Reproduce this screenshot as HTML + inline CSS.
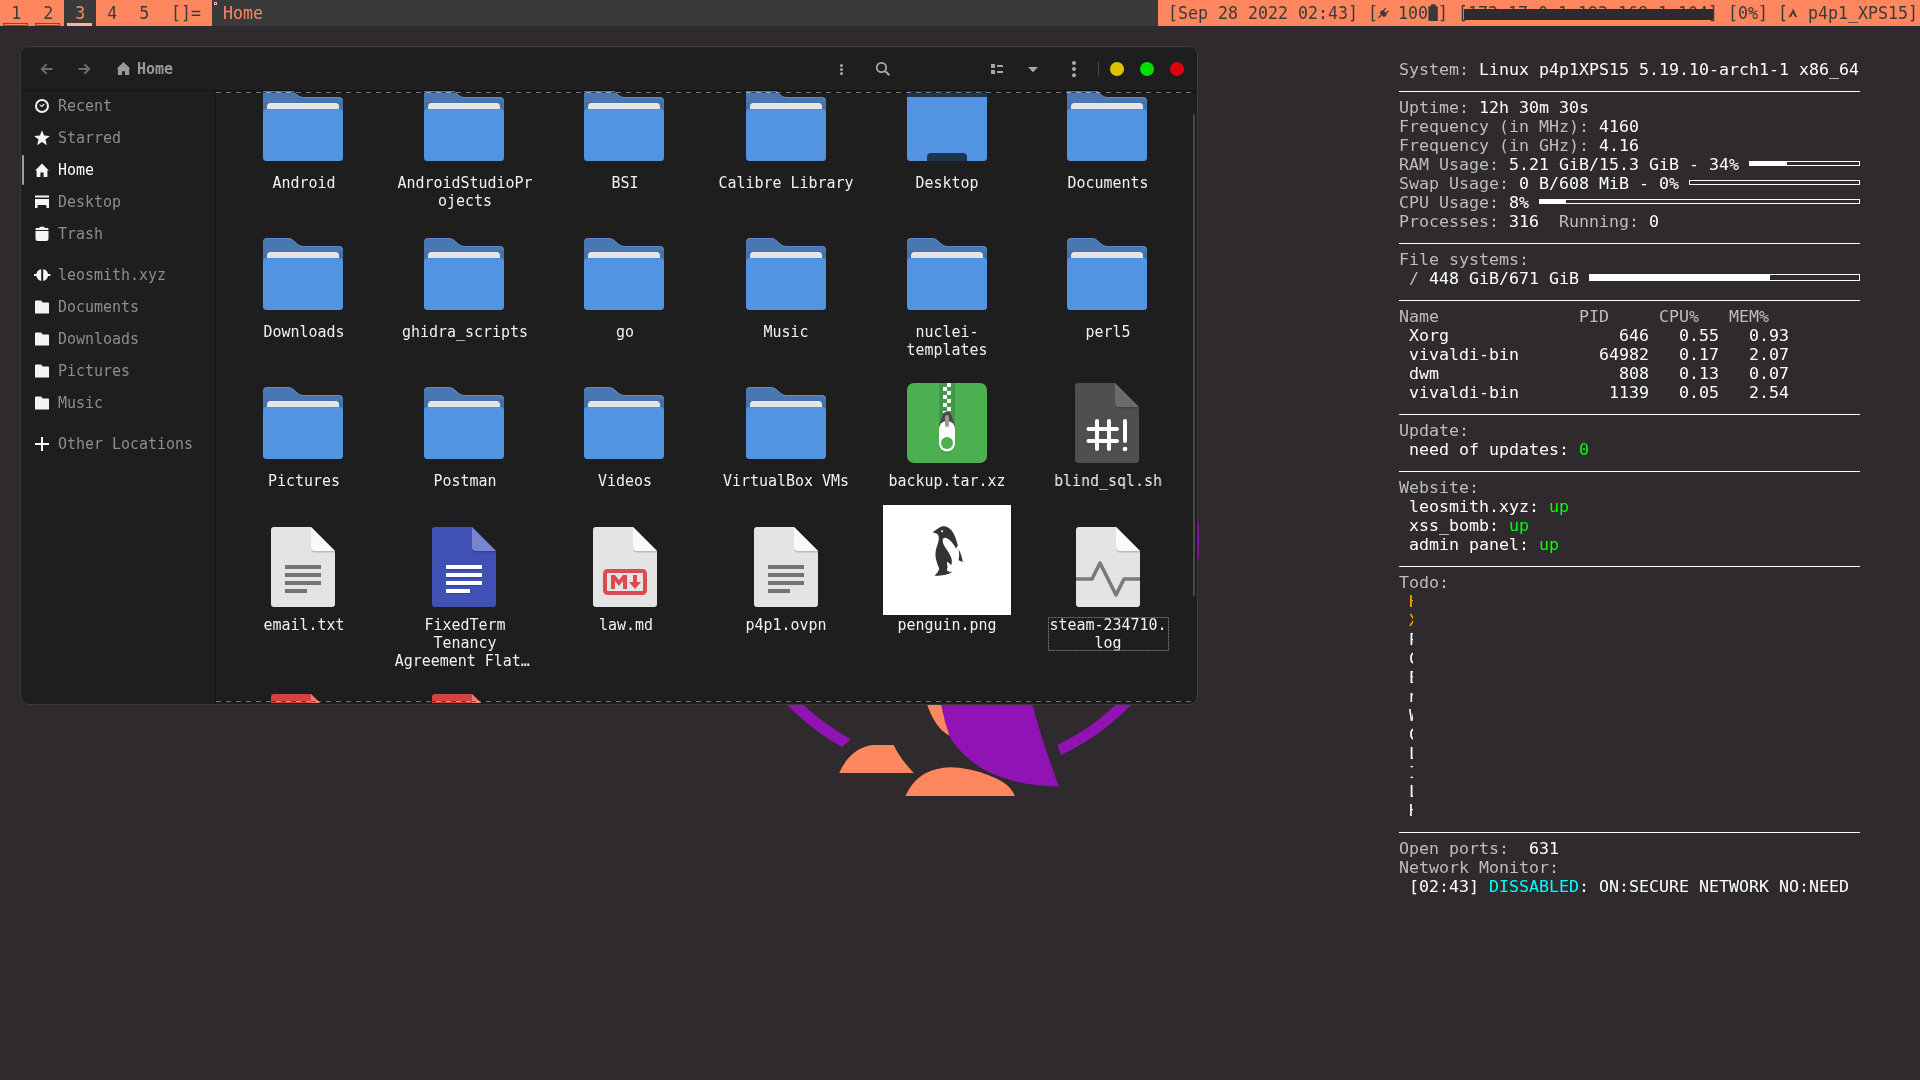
<!DOCTYPE html>
<html lang="en"><head><meta charset="utf-8"><title>Home</title>
<style>
*{box-sizing:border-box;margin:0;padding:0}
html,body{width:1920px;height:1080px;overflow:hidden;background:#2e2a2e}
body{position:relative;font-family:"DejaVu Sans Mono","Liberation Mono",monospace;}
.abs{position:absolute}
#wall{position:absolute;left:0;top:0;width:1920px;height:1080px}
#bar{position:absolute;left:0;top:0;width:1920px;height:26px;background:#3a3a3a;font-size:17.83px;line-height:26px;white-space:pre;will-change:transform;color:#ff875f}
#bar .t{position:absolute;top:0;height:26px;text-align:center}
#bar .t span{display:inline-block;height:26px;transform:scaleX(.9316);transform-origin:50% 50%}
#bar .l{text-align:left}
#bar .l span{transform-origin:0 50%}
#bar .o{background:#ff875f;color:#3a3a3a}
#bar svg{position:absolute}
#win{position:absolute;left:20px;top:46px;width:1178px;height:659px;border:1px solid #3b3b3b;border-radius:9px;background:#1e1e1e;overflow:hidden;will-change:transform;font-size:16.5px;line-height:18px;color:#f2f2f2}
#win svg{position:absolute;overflow:visible}
#hdr{position:absolute;left:0;top:0;width:1176px;height:44px;background:#1e1e1e;border-bottom:1px solid #151515;box-shadow:inset 0 1px 0 #262626}
#side{position:absolute;left:0;top:44px;width:195px;height:613px;border-right:1px solid #151515;white-space:pre}
#side .it{position:absolute;left:37px;height:18px;color:#929292;transform:scaleX(.906);transform-origin:0 50%}
#view{position:absolute;left:195px;top:44px;width:981px;height:612px;overflow:hidden}
#view .lb{position:absolute;width:200px;margin-left:-20px;text-align:center;white-space:pre;transform:scaleX(.906);transform-origin:50% 50%}
#conky{position:absolute;left:1399px;top:0;width:470px;height:920px;font-size:16.61px;line-height:19px;white-space:pre;color:#fff;will-change:transform}
#conky div{position:absolute;left:0;height:19px}
#conky .hr{height:1px;width:461px;background:#fff}
#conky .g{color:#bebebe}
#conky .bar{border:1px solid #fff;height:5px}
#conky .bar i{display:block;height:3px;background:#fff}
#conky .td{width:4px;overflow:hidden;left:10px}
</style></head>
<body>
<svg id="wall" viewBox="0 0 1920 1080" width="1920" height="1080"><path fill="#9213b5" d="M841.8 747 A239.0 239.0 0 1 1 1060.9 755.1 L1057.4 744.9 A227.3 227.3 0 1 0 851 739.3 Z"/><path fill="#9213b5" d="M1197.5 513 Q1200.8 541 1197.5 569 Z"/><path fill="#9213b5" d="M938 690 C939 700 941 712 944 720.5 C946 727 947.5 731 949 734.7 C951 739 953 742 956.2 746 C960 751 965 756 971.5 761.2 C978 766 984 770 991.8 773.4 C999 776.5 1005 778.5 1012.2 780.5 C1025 784 1040 786 1058.7 786.6 C1048 756 1039 730 1032.4 704.5 L1029 690 Z"/><path fill="#ff875f" d="M922 690 C924 698 925.5 701 927.2 704.5 C929 710 931 715 933.8 719.4 C938 727 943 732 949.5 735.5 L945 722 L940 700 L939 690 Z"/><path fill="#ff875f" d="M839.2 773 C844 762 852 752 862 748 C866 746 870 745 874 745 L893.7 745 C898 754 905 764 913.8 773 Z"/><path fill="#ff875f" d="M905.3 796 C910 787 916 778 925 773.5 C933 769.5 941 767.5 950 767.3 C962 767.5 975 770 985 774 C995 777.5 1003 781 1008 786 C1011 789 1013.5 792.5 1014.8 796 Z"/></svg>
<div id="bar"><span class="t o" style="left:0px;width:32px"><span>1</span></span><span class="t o" style="left:32px;width:32px"><span>2</span></span><span class="t" style="left:64px;width:32px"><span>3</span></span><span class="t o" style="left:96px;width:32px"><span>4</span></span><span class="t o" style="left:128px;width:32px"><span>5</span></span><span class="t o" style="left:160px;width:52px"><span>[]=</span></span><span class="t l" style="left:223px"><span>Home</span></span><span class="abs" style="left:3px;top:23px;width:25px;height:3px;border:1px solid #505862"></span><span class="abs" style="left:35px;top:23px;width:25px;height:3px;border:1px solid #505862"></span><span class="abs" style="left:67px;top:23px;width:25px;height:3px;background:#ffb392"></span><span class="abs" style="left:214px;top:2px;width:3px;height:3px;border:1px solid #ffba92;background:#3a302c"></span><span class="abs o" style="left:1158px;top:0;width:762px;height:26px"></span><span class="t l" style="left:1168px;color:#3a3a3a"><span>[Sep 28 2022 02:43] [</span></span><span class="t l" style="left:1398px;color:#3a3a3a"><span>100</span></span><span class="t l" style="left:1438px;color:#3a3a3a"><span>] [172.17.0.1 192.168.1.104] [0%] [</span></span><span class="t l" style="left:1808px;color:#3a3a3a"><span>p4p1_XPS15]</span></span><svg style="left:1378px;top:7px" width="11" height="12" viewBox="0 0 11 12"><g fill="#3a3a3a" stroke="#3a3a3a" stroke-linecap="round"><path d="M0.6 10.6 L3 8.2" stroke-width="1.3" fill="none"/><path d="M2.2 6.3 L5.6 9.7 C7.6 9.6 8.6 8.2 8.3 6.6 L5.3 3.6 C3.5 3.4 2.2 4.5 2.2 6.3 Z" stroke-width="0.6"/><path d="M5.6 3.6 L7.6 1.4 M8.2 6.2 L10.3 4.1" stroke-width="1.2" fill="none"/></g></svg><svg style="left:1428px;top:4px" width="10" height="17" viewBox="0 0 10 17"><path fill="#3a3a3a" d="M3 0.3 h4.6 v2 h1.6 q0.6 0 0.6 0.6 v13.4 q0 0.6 -0.6 0.6 h-8.2 q-0.6 0 -0.6 -0.6 v-13.4 q0 -0.6 0.6 -0.6 h2 z"/></svg><svg style="left:1788px;top:8px" width="10" height="10" viewBox="0 0 10 10"><path fill="#3a3a3a" d="M5 0.5 C4.6 1.6 4.3 2.3 3.8 3.3 C4.1 3.6 4.5 4 5.1 4.4 C4.4 4.1 4 3.9 3.6 3.7 C3 5 2 6.900 0.200 9.800 C1.700 8.900 2.900 8.400 4 8.200 C3.950 8 3.900 7.800 3.900 7.500 C3.950 6.500 4.500 5.700 5.100 5.750 C5.700 5.800 6.150 6.600 6.100 7.600 C6.100 7.800 6.050 8 6 8.200 C7.100 8.400 8.300 8.900 9.800 9.800 C9.500 9.250 9.250 8.750 9 8.300 C8.600 8 8.200 7.600 7.400 7.200 C7.950 7.350 8.350 7.500 8.650 7.700 C6.200 3.100 6 2.500 5 0.500 Z"/></svg><span class="abs" style="left:1464px;top:9px;width:249px;height:11px;background:#2e2a2e;border-radius:1px"></span></div>
<div id="win"><div id="hdr"><svg style="left:19px;top:15px" width="14" height="14" viewBox="0 0 14 14"><path d="M12.5 7 H2 M6.6 2.2 L1.8 7 L6.6 11.8" fill="none" stroke="#6c6c6c" stroke-width="2"/></svg><svg style="left:56px;top:15px" width="14" height="14" viewBox="0 0 14 14"><path d="M1.5 7 H12 M7.4 2.2 L12.2 7 L7.4 11.8" fill="none" stroke="#6c6c6c" stroke-width="2"/></svg><svg style="left:95px;top:14px" width="16" height="16" viewBox="0 0 16 16"><path fill="#9a9a9a" d="M7.500 0.900 L14.200 7.600 H13.200 V14 H9 V10.300 H6.100 V14 H1.900 V7.600 H0.900 Z"/></svg><span class="abs" style="left:116px;top:13px;font-weight:bold;color:#9a9a9a;white-space:pre;transform:scaleX(.906);transform-origin:0 50%">Home</span><svg style="left:817px;top:15px" width="8" height="16" viewBox="0 0 8 16"><g fill="#a8a8a8"><circle cx="3.5" cy="3.6" r="1.5"/><circle cx="3.5" cy="7.6" r="1.5"/><circle cx="3.5" cy="11.6" r="1.5"/></g></svg><svg style="left:853px;top:13px" width="18" height="18" viewBox="0 0 18 18"><g fill="none" stroke="#a8a8a8" stroke-width="1.8"><circle cx="7.5" cy="7.5" r="4.7"/><path d="M11 11 L15.4 15.2" stroke-width="2"/></g></svg><svg style="left:969px;top:15px" width="16" height="14" viewBox="0 0 16 14"><g fill="#a8a8a8"><rect x="1" y="2" width="4" height="4"/><rect x="1" y="8" width="4" height="4"/><rect x="7" y="3" width="6" height="2"/><rect x="7" y="9" width="6" height="2"/></g></svg><svg style="left:1005px;top:17px" width="14" height="10" viewBox="0 0 14 10"><path fill="#a8a8a8" d="M2 3 H12 L7 8.2 Z"/></svg><svg style="left:1049px;top:13px" width="8" height="18" viewBox="0 0 8 18"><g fill="#a8a8a8"><circle cx="4" cy="3" r="2"/><circle cx="4" cy="9.1" r="2"/><circle cx="4" cy="15.2" r="2"/></g></svg><span class="abs" style="left:1077px;top:15px;width:1px;height:14px;background:#4a4a4a"></span><span class="abs" style="left:1089px;top:15px;width:14px;height:14px;border-radius:50%;background:#e0c300"></span><span class="abs" style="left:1119px;top:15px;width:14px;height:14px;border-radius:50%;background:#00e000"></span><span class="abs" style="left:1149px;top:15px;width:14px;height:14px;border-radius:50%;background:#e0000f"></span></div><div id="side"><svg style="left:13px;top:7px" width="16" height="16" viewBox="0 0 16 16"><circle cx="8" cy="8" r="6" fill="none" stroke="#f6f5f4" stroke-width="2"/><path d="M5.600 6.600 L7.900 8.400 L10.300 6" fill="none" stroke="#f6f5f4" stroke-width="1.100"/></svg><span class="it" style="top:6px;color:#8e8e8e">Recent</span><svg style="left:13px;top:39px" width="16" height="16" viewBox="0 0 16 16"><path fill="#f6f5f4" d="M8 0.2 L10.1 5.6 L15.9 5.9 L11.4 9.6 L12.9 15.2 L8 12.1 L3.1 15.2 L4.6 9.6 L0.1 5.9 L5.9 5.6 Z"/></svg><span class="it" style="top:38px;color:#8e8e8e">Starred</span><svg style="left:13px;top:71px" width="16" height="16" viewBox="0 0 16 16"><path fill="#f6f5f4" d="M8 1.6 L14.8 8.4 H13.4 V15 H9.6 V10.6 H6.4 V15 H2.6 V8.4 H1.2 Z"/></svg><span class="it" style="top:70px;color:#ffffff">Home</span><svg style="left:13px;top:103px" width="16" height="16" viewBox="0 0 16 16"><path fill="#f6f5f4" d="M1 1.5 H15 V3.5 H1 Z M1 5 H15 V14 H12.5 V12 Q12.5 11 11.5 11 H4.5 Q3.500 11 3.500 12 V14 H1 Z"/></svg><span class="it" style="top:102px;color:#8e8e8e">Desktop</span><svg style="left:13px;top:135px" width="16" height="16" viewBox="0 0 16 16"><path fill="#f6f5f4" d="M5.500 0.800 H10.500 V2 H13.500 Q14.500 2 14.500 3 V4 H1.500 V3 Q1.500 2 2.500 2 H5.500 Z M1.500 5 H14.500 V12.500 Q14.500 15 12 15 H4 Q1.500 15 1.500 12.500 Z"/></svg><span class="it" style="top:134px;color:#8e8e8e">Trash</span><svg style="left:13px;top:176px" width="16" height="16" viewBox="0 0 16 16"><path fill="#f6f5f4" d="M7.2 2.3 V13.900 A5.850 5.850 0 0 1 2.400 9.100 H0 V7.100 H2.400 A5.850 5.850 0 0 1 7.200 2.300 Z M9.200 2.300 A5.850 5.850 0 0 1 14 7.100 H16.400 V9.100 H14 A5.850 5.850 0 0 1 9.200 13.900 Z"/></svg><span class="it" style="top:175px;color:#8e8e8e">leosmith.xyz</span><svg style="left:13px;top:208px" width="16" height="16" viewBox="0 0 16 16"><path fill="#f6f5f4" d="M1 2.5 Q1 1.5 2 1.500 H6.500 Q7.500 1.500 8 2.500 L8.600 3.500 H14 Q15 3.500 15 4.500 V14.500 H1 Z"/></svg><span class="it" style="top:207px;color:#8e8e8e">Documents</span><svg style="left:13px;top:240px" width="16" height="16" viewBox="0 0 16 16"><path fill="#f6f5f4" d="M1 2.5 Q1 1.5 2 1.500 H6.500 Q7.500 1.500 8 2.500 L8.600 3.500 H14 Q15 3.500 15 4.500 V14.500 H1 Z"/></svg><span class="it" style="top:239px;color:#8e8e8e">Downloads</span><svg style="left:13px;top:272px" width="16" height="16" viewBox="0 0 16 16"><path fill="#f6f5f4" d="M1 2.5 Q1 1.5 2 1.500 H6.500 Q7.500 1.500 8 2.500 L8.600 3.500 H14 Q15 3.500 15 4.500 V14.500 H1 Z"/></svg><span class="it" style="top:271px;color:#8e8e8e">Pictures</span><svg style="left:13px;top:304px" width="16" height="16" viewBox="0 0 16 16"><path fill="#f6f5f4" d="M1 2.5 Q1 1.5 2 1.500 H6.500 Q7.500 1.500 8 2.500 L8.600 3.500 H14 Q15 3.500 15 4.500 V14.500 H1 Z"/></svg><span class="it" style="top:303px;color:#8e8e8e">Music</span><svg style="left:13px;top:345px" width="16" height="16" viewBox="0 0 16 16"><path fill="#f6f5f4" d="M7 1 H9 V7 H15 V9 H9 V15 H7 V9 H1 V7 H7 Z"/></svg><span class="it" style="top:344px;color:#8e8e8e">Other Locations</span><span class="abs" style="left:1px;top:64px;width:2px;height:30px;background:#9e9e9e;border-radius:1px"></span></div><div id="view"><svg style="left:47px;top:-2px" width="80" height="72" viewBox="0 0 80 72"><path fill="#4877b1" d="M0 4 Q0 0 4 0 H25 Q28 0 30.5 2.200 L34.500 5.800 Q37 8 40 8 H76 Q80 8 80 12 V60 H0 Z"/><path fill="none" stroke="#6b9ad3" stroke-width="1" opacity=".55" d="M0.500 4.500 Q0.500 0.500 4 0.500 H25 Q28 0.500 30.300 2.600 L34.300 6.200 Q37 8.500 40 8.500 H76 Q79.500 8.500 79.500 12"/><path fill="#3b6aa6" d="M0 13 H80 V24 H0 Z" opacity=".35"/><path fill="#e4e4e4" d="M4 17.500 Q4 14 7.500 14 H72.500 Q76 14 76 17.500 V26 H4 Z"/><path fill="#f3f0ea" d="M4.500 17 Q5 14.600 7.500 14.500 H72.500 Q75 14.600 75.500 17 Q75 15.400 72.500 15.300 H7.500 Q5 15.400 4.500 17 Z"/><path fill="#5294e2" d="M0 24 Q0 20 4 20 H76 Q80 20 80 24 V68.500 Q80 72 76.500 72 H3.500 Q0 72 0 68.500 Z"/><path fill="#4a8fe3" d="M0.300 23 Q1 20 4 20 H76 Q79 20 79.700 23 Q79 21 76 21 H4 Q1 21 0.300 23 Z"/></svg><div class="lb" style="left:7.6px;top:83px">Android</div><svg style="left:208px;top:-2px" width="80" height="72" viewBox="0 0 80 72"><path fill="#4877b1" d="M0 4 Q0 0 4 0 H25 Q28 0 30.5 2.200 L34.500 5.800 Q37 8 40 8 H76 Q80 8 80 12 V60 H0 Z"/><path fill="none" stroke="#6b9ad3" stroke-width="1" opacity=".55" d="M0.500 4.500 Q0.500 0.500 4 0.500 H25 Q28 0.500 30.300 2.600 L34.300 6.200 Q37 8.500 40 8.500 H76 Q79.500 8.500 79.500 12"/><path fill="#3b6aa6" d="M0 13 H80 V24 H0 Z" opacity=".35"/><path fill="#e4e4e4" d="M4 17.500 Q4 14 7.500 14 H72.500 Q76 14 76 17.500 V26 H4 Z"/><path fill="#f3f0ea" d="M4.500 17 Q5 14.600 7.500 14.500 H72.500 Q75 14.600 75.500 17 Q75 15.400 72.500 15.300 H7.500 Q5 15.400 4.500 17 Z"/><path fill="#5294e2" d="M0 24 Q0 20 4 20 H76 Q80 20 80 24 V68.500 Q80 72 76.500 72 H3.500 Q0 72 0 68.500 Z"/><path fill="#4a8fe3" d="M0.300 23 Q1 20 4 20 H76 Q79 20 79.700 23 Q79 21 76 21 H4 Q1 21 0.300 23 Z"/></svg><div class="lb" style="left:168.5px;top:83px">AndroidStudioPr<br>ojects</div><svg style="left:368px;top:-2px" width="80" height="72" viewBox="0 0 80 72"><path fill="#4877b1" d="M0 4 Q0 0 4 0 H25 Q28 0 30.5 2.200 L34.500 5.800 Q37 8 40 8 H76 Q80 8 80 12 V60 H0 Z"/><path fill="none" stroke="#6b9ad3" stroke-width="1" opacity=".55" d="M0.500 4.500 Q0.500 0.500 4 0.500 H25 Q28 0.500 30.300 2.600 L34.300 6.200 Q37 8.500 40 8.500 H76 Q79.500 8.500 79.500 12"/><path fill="#3b6aa6" d="M0 13 H80 V24 H0 Z" opacity=".35"/><path fill="#e4e4e4" d="M4 17.500 Q4 14 7.500 14 H72.500 Q76 14 76 17.500 V26 H4 Z"/><path fill="#f3f0ea" d="M4.500 17 Q5 14.600 7.500 14.500 H72.500 Q75 14.600 75.500 17 Q75 15.400 72.500 15.300 H7.500 Q5 15.400 4.500 17 Z"/><path fill="#5294e2" d="M0 24 Q0 20 4 20 H76 Q80 20 80 24 V68.500 Q80 72 76.500 72 H3.500 Q0 72 0 68.500 Z"/><path fill="#4a8fe3" d="M0.300 23 Q1 20 4 20 H76 Q79 20 79.700 23 Q79 21 76 21 H4 Q1 21 0.300 23 Z"/></svg><div class="lb" style="left:328.75px;top:83px">BSI</div><svg style="left:530px;top:-2px" width="80" height="72" viewBox="0 0 80 72"><path fill="#4877b1" d="M0 4 Q0 0 4 0 H25 Q28 0 30.5 2.200 L34.500 5.800 Q37 8 40 8 H76 Q80 8 80 12 V60 H0 Z"/><path fill="none" stroke="#6b9ad3" stroke-width="1" opacity=".55" d="M0.500 4.500 Q0.500 0.500 4 0.500 H25 Q28 0.500 30.300 2.600 L34.300 6.200 Q37 8.500 40 8.500 H76 Q79.500 8.500 79.500 12"/><path fill="#3b6aa6" d="M0 13 H80 V24 H0 Z" opacity=".35"/><path fill="#e4e4e4" d="M4 17.500 Q4 14 7.500 14 H72.500 Q76 14 76 17.500 V26 H4 Z"/><path fill="#f3f0ea" d="M4.500 17 Q5 14.600 7.500 14.500 H72.500 Q75 14.600 75.500 17 Q75 15.400 72.500 15.300 H7.500 Q5 15.400 4.500 17 Z"/><path fill="#5294e2" d="M0 24 Q0 20 4 20 H76 Q80 20 80 24 V68.500 Q80 72 76.500 72 H3.500 Q0 72 0 68.500 Z"/><path fill="#4a8fe3" d="M0.300 23 Q1 20 4 20 H76 Q79 20 79.700 23 Q79 21 76 21 H4 Q1 21 0.300 23 Z"/></svg><div class="lb" style="left:490px;top:83px">Calibre Library</div><svg style="left:691px;top:-2px" width="80" height="72" viewBox="0 0 80 72"><path fill="#5294e2" d="M0 3 Q0 0 3 0 H77 Q80 0 80 3 V68.500 Q80 72 76.500 72 H3.500 Q0 72 0 68.500 Z"/><path fill="#1d344f" d="M0 3 Q0 0 3 0 H77 Q80 0 80 3 V8 H0 Z"/><path fill="#1d344f" d="M20 72 V68 Q20 64 24 64 H56 Q60 64 60 68 V72 Z"/></svg><div class="lb" style="left:651.35px;top:83px">Desktop</div><svg style="left:851px;top:-2px" width="80" height="72" viewBox="0 0 80 72"><path fill="#4877b1" d="M0 4 Q0 0 4 0 H25 Q28 0 30.5 2.200 L34.500 5.800 Q37 8 40 8 H76 Q80 8 80 12 V60 H0 Z"/><path fill="none" stroke="#6b9ad3" stroke-width="1" opacity=".55" d="M0.500 4.500 Q0.500 0.500 4 0.500 H25 Q28 0.500 30.300 2.600 L34.300 6.200 Q37 8.500 40 8.500 H76 Q79.500 8.500 79.500 12"/><path fill="#3b6aa6" d="M0 13 H80 V24 H0 Z" opacity=".35"/><path fill="#e4e4e4" d="M4 17.500 Q4 14 7.500 14 H72.500 Q76 14 76 17.500 V26 H4 Z"/><path fill="#f3f0ea" d="M4.500 17 Q5 14.600 7.500 14.500 H72.500 Q75 14.600 75.500 17 Q75 15.400 72.500 15.300 H7.500 Q5 15.400 4.500 17 Z"/><path fill="#5294e2" d="M0 24 Q0 20 4 20 H76 Q80 20 80 24 V68.500 Q80 72 76.500 72 H3.500 Q0 72 0 68.500 Z"/><path fill="#4a8fe3" d="M0.300 23 Q1 20 4 20 H76 Q79 20 79.700 23 Q79 21 76 21 H4 Q1 21 0.300 23 Z"/></svg><div class="lb" style="left:812px;top:83px">Documents</div><svg style="left:47px;top:147px" width="80" height="72" viewBox="0 0 80 72"><path fill="#4877b1" d="M0 4 Q0 0 4 0 H25 Q28 0 30.5 2.200 L34.500 5.800 Q37 8 40 8 H76 Q80 8 80 12 V60 H0 Z"/><path fill="none" stroke="#6b9ad3" stroke-width="1" opacity=".55" d="M0.500 4.500 Q0.500 0.500 4 0.500 H25 Q28 0.500 30.300 2.600 L34.300 6.200 Q37 8.500 40 8.500 H76 Q79.500 8.500 79.500 12"/><path fill="#3b6aa6" d="M0 13 H80 V24 H0 Z" opacity=".35"/><path fill="#e4e4e4" d="M4 17.500 Q4 14 7.500 14 H72.500 Q76 14 76 17.500 V26 H4 Z"/><path fill="#f3f0ea" d="M4.500 17 Q5 14.600 7.500 14.500 H72.500 Q75 14.600 75.500 17 Q75 15.400 72.500 15.300 H7.500 Q5 15.400 4.500 17 Z"/><path fill="#5294e2" d="M0 24 Q0 20 4 20 H76 Q80 20 80 24 V68.500 Q80 72 76.500 72 H3.500 Q0 72 0 68.500 Z"/><path fill="#4a8fe3" d="M0.300 23 Q1 20 4 20 H76 Q79 20 79.700 23 Q79 21 76 21 H4 Q1 21 0.300 23 Z"/></svg><div class="lb" style="left:7.6px;top:232px">Downloads</div><svg style="left:208px;top:147px" width="80" height="72" viewBox="0 0 80 72"><path fill="#4877b1" d="M0 4 Q0 0 4 0 H25 Q28 0 30.5 2.200 L34.500 5.800 Q37 8 40 8 H76 Q80 8 80 12 V60 H0 Z"/><path fill="none" stroke="#6b9ad3" stroke-width="1" opacity=".55" d="M0.500 4.500 Q0.500 0.500 4 0.500 H25 Q28 0.500 30.300 2.600 L34.300 6.200 Q37 8.500 40 8.500 H76 Q79.500 8.500 79.500 12"/><path fill="#3b6aa6" d="M0 13 H80 V24 H0 Z" opacity=".35"/><path fill="#e4e4e4" d="M4 17.500 Q4 14 7.500 14 H72.500 Q76 14 76 17.500 V26 H4 Z"/><path fill="#f3f0ea" d="M4.500 17 Q5 14.600 7.500 14.500 H72.500 Q75 14.600 75.500 17 Q75 15.400 72.500 15.300 H7.500 Q5 15.400 4.500 17 Z"/><path fill="#5294e2" d="M0 24 Q0 20 4 20 H76 Q80 20 80 24 V68.500 Q80 72 76.500 72 H3.500 Q0 72 0 68.500 Z"/><path fill="#4a8fe3" d="M0.300 23 Q1 20 4 20 H76 Q79 20 79.700 23 Q79 21 76 21 H4 Q1 21 0.300 23 Z"/></svg><div class="lb" style="left:168.5px;top:232px">ghidra_scripts</div><svg style="left:368px;top:147px" width="80" height="72" viewBox="0 0 80 72"><path fill="#4877b1" d="M0 4 Q0 0 4 0 H25 Q28 0 30.5 2.200 L34.500 5.800 Q37 8 40 8 H76 Q80 8 80 12 V60 H0 Z"/><path fill="none" stroke="#6b9ad3" stroke-width="1" opacity=".55" d="M0.500 4.500 Q0.500 0.500 4 0.500 H25 Q28 0.500 30.300 2.600 L34.300 6.200 Q37 8.500 40 8.500 H76 Q79.500 8.500 79.500 12"/><path fill="#3b6aa6" d="M0 13 H80 V24 H0 Z" opacity=".35"/><path fill="#e4e4e4" d="M4 17.500 Q4 14 7.500 14 H72.500 Q76 14 76 17.500 V26 H4 Z"/><path fill="#f3f0ea" d="M4.500 17 Q5 14.600 7.500 14.500 H72.500 Q75 14.600 75.500 17 Q75 15.400 72.500 15.300 H7.500 Q5 15.400 4.500 17 Z"/><path fill="#5294e2" d="M0 24 Q0 20 4 20 H76 Q80 20 80 24 V68.500 Q80 72 76.500 72 H3.500 Q0 72 0 68.500 Z"/><path fill="#4a8fe3" d="M0.300 23 Q1 20 4 20 H76 Q79 20 79.700 23 Q79 21 76 21 H4 Q1 21 0.300 23 Z"/></svg><div class="lb" style="left:328.75px;top:232px">go</div><svg style="left:530px;top:147px" width="80" height="72" viewBox="0 0 80 72"><path fill="#4877b1" d="M0 4 Q0 0 4 0 H25 Q28 0 30.5 2.200 L34.500 5.800 Q37 8 40 8 H76 Q80 8 80 12 V60 H0 Z"/><path fill="none" stroke="#6b9ad3" stroke-width="1" opacity=".55" d="M0.500 4.500 Q0.500 0.500 4 0.500 H25 Q28 0.500 30.300 2.600 L34.300 6.200 Q37 8.500 40 8.500 H76 Q79.500 8.500 79.500 12"/><path fill="#3b6aa6" d="M0 13 H80 V24 H0 Z" opacity=".35"/><path fill="#e4e4e4" d="M4 17.500 Q4 14 7.500 14 H72.500 Q76 14 76 17.500 V26 H4 Z"/><path fill="#f3f0ea" d="M4.500 17 Q5 14.600 7.500 14.500 H72.500 Q75 14.600 75.500 17 Q75 15.400 72.500 15.300 H7.500 Q5 15.400 4.500 17 Z"/><path fill="#5294e2" d="M0 24 Q0 20 4 20 H76 Q80 20 80 24 V68.500 Q80 72 76.500 72 H3.500 Q0 72 0 68.500 Z"/><path fill="#4a8fe3" d="M0.300 23 Q1 20 4 20 H76 Q79 20 79.700 23 Q79 21 76 21 H4 Q1 21 0.300 23 Z"/></svg><div class="lb" style="left:490px;top:232px">Music</div><svg style="left:691px;top:147px" width="80" height="72" viewBox="0 0 80 72"><path fill="#4877b1" d="M0 4 Q0 0 4 0 H25 Q28 0 30.5 2.200 L34.500 5.800 Q37 8 40 8 H76 Q80 8 80 12 V60 H0 Z"/><path fill="none" stroke="#6b9ad3" stroke-width="1" opacity=".55" d="M0.500 4.500 Q0.500 0.500 4 0.500 H25 Q28 0.500 30.300 2.600 L34.300 6.200 Q37 8.500 40 8.500 H76 Q79.500 8.500 79.500 12"/><path fill="#3b6aa6" d="M0 13 H80 V24 H0 Z" opacity=".35"/><path fill="#e4e4e4" d="M4 17.500 Q4 14 7.500 14 H72.500 Q76 14 76 17.500 V26 H4 Z"/><path fill="#f3f0ea" d="M4.500 17 Q5 14.600 7.500 14.500 H72.500 Q75 14.600 75.500 17 Q75 15.400 72.500 15.300 H7.500 Q5 15.400 4.500 17 Z"/><path fill="#5294e2" d="M0 24 Q0 20 4 20 H76 Q80 20 80 24 V68.500 Q80 72 76.500 72 H3.500 Q0 72 0 68.500 Z"/><path fill="#4a8fe3" d="M0.300 23 Q1 20 4 20 H76 Q79 20 79.700 23 Q79 21 76 21 H4 Q1 21 0.300 23 Z"/></svg><div class="lb" style="left:651.35px;top:232px">nuclei-<br>templates</div><svg style="left:851px;top:147px" width="80" height="72" viewBox="0 0 80 72"><path fill="#4877b1" d="M0 4 Q0 0 4 0 H25 Q28 0 30.5 2.200 L34.500 5.800 Q37 8 40 8 H76 Q80 8 80 12 V60 H0 Z"/><path fill="none" stroke="#6b9ad3" stroke-width="1" opacity=".55" d="M0.500 4.500 Q0.500 0.500 4 0.500 H25 Q28 0.500 30.300 2.600 L34.300 6.200 Q37 8.500 40 8.500 H76 Q79.500 8.500 79.500 12"/><path fill="#3b6aa6" d="M0 13 H80 V24 H0 Z" opacity=".35"/><path fill="#e4e4e4" d="M4 17.500 Q4 14 7.500 14 H72.500 Q76 14 76 17.500 V26 H4 Z"/><path fill="#f3f0ea" d="M4.500 17 Q5 14.600 7.500 14.500 H72.500 Q75 14.600 75.500 17 Q75 15.400 72.500 15.300 H7.500 Q5 15.400 4.500 17 Z"/><path fill="#5294e2" d="M0 24 Q0 20 4 20 H76 Q80 20 80 24 V68.500 Q80 72 76.500 72 H3.500 Q0 72 0 68.500 Z"/><path fill="#4a8fe3" d="M0.300 23 Q1 20 4 20 H76 Q79 20 79.700 23 Q79 21 76 21 H4 Q1 21 0.300 23 Z"/></svg><div class="lb" style="left:812px;top:232px">perl5</div><svg style="left:47px;top:296px" width="80" height="72" viewBox="0 0 80 72"><path fill="#4877b1" d="M0 4 Q0 0 4 0 H25 Q28 0 30.5 2.200 L34.500 5.800 Q37 8 40 8 H76 Q80 8 80 12 V60 H0 Z"/><path fill="none" stroke="#6b9ad3" stroke-width="1" opacity=".55" d="M0.500 4.500 Q0.500 0.500 4 0.500 H25 Q28 0.500 30.300 2.600 L34.300 6.200 Q37 8.500 40 8.500 H76 Q79.500 8.500 79.500 12"/><path fill="#3b6aa6" d="M0 13 H80 V24 H0 Z" opacity=".35"/><path fill="#e4e4e4" d="M4 17.500 Q4 14 7.500 14 H72.500 Q76 14 76 17.500 V26 H4 Z"/><path fill="#f3f0ea" d="M4.500 17 Q5 14.600 7.500 14.500 H72.500 Q75 14.600 75.500 17 Q75 15.400 72.500 15.300 H7.500 Q5 15.400 4.500 17 Z"/><path fill="#5294e2" d="M0 24 Q0 20 4 20 H76 Q80 20 80 24 V68.500 Q80 72 76.500 72 H3.500 Q0 72 0 68.500 Z"/><path fill="#4a8fe3" d="M0.300 23 Q1 20 4 20 H76 Q79 20 79.700 23 Q79 21 76 21 H4 Q1 21 0.300 23 Z"/></svg><div class="lb" style="left:7.6px;top:381px">Pictures</div><svg style="left:208px;top:296px" width="80" height="72" viewBox="0 0 80 72"><path fill="#4877b1" d="M0 4 Q0 0 4 0 H25 Q28 0 30.5 2.200 L34.500 5.800 Q37 8 40 8 H76 Q80 8 80 12 V60 H0 Z"/><path fill="none" stroke="#6b9ad3" stroke-width="1" opacity=".55" d="M0.500 4.500 Q0.500 0.500 4 0.500 H25 Q28 0.500 30.300 2.600 L34.300 6.200 Q37 8.500 40 8.500 H76 Q79.500 8.500 79.500 12"/><path fill="#3b6aa6" d="M0 13 H80 V24 H0 Z" opacity=".35"/><path fill="#e4e4e4" d="M4 17.500 Q4 14 7.500 14 H72.500 Q76 14 76 17.500 V26 H4 Z"/><path fill="#f3f0ea" d="M4.500 17 Q5 14.600 7.500 14.500 H72.500 Q75 14.600 75.500 17 Q75 15.400 72.500 15.300 H7.500 Q5 15.400 4.500 17 Z"/><path fill="#5294e2" d="M0 24 Q0 20 4 20 H76 Q80 20 80 24 V68.500 Q80 72 76.500 72 H3.500 Q0 72 0 68.500 Z"/><path fill="#4a8fe3" d="M0.300 23 Q1 20 4 20 H76 Q79 20 79.700 23 Q79 21 76 21 H4 Q1 21 0.300 23 Z"/></svg><div class="lb" style="left:168.5px;top:381px">Postman</div><svg style="left:368px;top:296px" width="80" height="72" viewBox="0 0 80 72"><path fill="#4877b1" d="M0 4 Q0 0 4 0 H25 Q28 0 30.5 2.200 L34.500 5.800 Q37 8 40 8 H76 Q80 8 80 12 V60 H0 Z"/><path fill="none" stroke="#6b9ad3" stroke-width="1" opacity=".55" d="M0.500 4.500 Q0.500 0.500 4 0.500 H25 Q28 0.500 30.300 2.600 L34.300 6.200 Q37 8.500 40 8.500 H76 Q79.500 8.500 79.500 12"/><path fill="#3b6aa6" d="M0 13 H80 V24 H0 Z" opacity=".35"/><path fill="#e4e4e4" d="M4 17.500 Q4 14 7.500 14 H72.500 Q76 14 76 17.500 V26 H4 Z"/><path fill="#f3f0ea" d="M4.500 17 Q5 14.600 7.500 14.500 H72.500 Q75 14.600 75.500 17 Q75 15.400 72.500 15.300 H7.500 Q5 15.400 4.500 17 Z"/><path fill="#5294e2" d="M0 24 Q0 20 4 20 H76 Q80 20 80 24 V68.500 Q80 72 76.500 72 H3.500 Q0 72 0 68.500 Z"/><path fill="#4a8fe3" d="M0.300 23 Q1 20 4 20 H76 Q79 20 79.700 23 Q79 21 76 21 H4 Q1 21 0.300 23 Z"/></svg><div class="lb" style="left:328.75px;top:381px">Videos</div><svg style="left:530px;top:296px" width="80" height="72" viewBox="0 0 80 72"><path fill="#4877b1" d="M0 4 Q0 0 4 0 H25 Q28 0 30.5 2.200 L34.500 5.800 Q37 8 40 8 H76 Q80 8 80 12 V60 H0 Z"/><path fill="none" stroke="#6b9ad3" stroke-width="1" opacity=".55" d="M0.500 4.500 Q0.500 0.500 4 0.500 H25 Q28 0.500 30.300 2.600 L34.300 6.200 Q37 8.500 40 8.500 H76 Q79.500 8.500 79.500 12"/><path fill="#3b6aa6" d="M0 13 H80 V24 H0 Z" opacity=".35"/><path fill="#e4e4e4" d="M4 17.500 Q4 14 7.500 14 H72.500 Q76 14 76 17.500 V26 H4 Z"/><path fill="#f3f0ea" d="M4.500 17 Q5 14.600 7.500 14.500 H72.500 Q75 14.600 75.500 17 Q75 15.400 72.500 15.300 H7.500 Q5 15.400 4.500 17 Z"/><path fill="#5294e2" d="M0 24 Q0 20 4 20 H76 Q80 20 80 24 V68.500 Q80 72 76.500 72 H3.500 Q0 72 0 68.500 Z"/><path fill="#4a8fe3" d="M0.300 23 Q1 20 4 20 H76 Q79 20 79.700 23 Q79 21 76 21 H4 Q1 21 0.300 23 Z"/></svg><div class="lb" style="left:490px;top:381px">VirtualBox VMs</div><svg style="left:691px;top:292px" width="80" height="80" viewBox="0 0 80 80"><rect width="80" height="80" rx="7" fill="#4caf50"/><rect x="32" y="0" width="16" height="40" fill="#43964a"/><path fill="#fff" d="M40 0h4v4h-4z M36 4h4v4h-4z M40 8h4v4h-4z M36 12h4v4h-4z M40 16h4v4h-4z M36 20h4v4h-4z M40 24h4v4h-4z M36 28h4v2h-4z"/><path fill="#000" opacity=".15" d="M32 47 a8 8 0 0 1 16 0 v15 a8 8 0 0 1 -16 0 z"/><path fill="#4a4a4a" d="M32 42 L36 31 Q37 28.500 40 28.500 Q43 28.500 44 31 L48 42 V46 H32 Z"/><path fill="#fff" d="M32 46 a8 8 0 0 1 16 0 v14.500 a8 8 0 0 1 -16 0 z"/><circle cx="40" cy="60" r="6" fill="#4caf50"/><rect x="38" y="32" width="4" height="12" rx="2" fill="#9a9a9a"/></svg><div class="lb" style="left:651.35px;top:381px">backup.tar.xz</div><svg style="left:859px;top:292px" width="64" height="80" viewBox="0 0 64 80"><path fill="#4f4f4f" d="M0 3 Q0 0 3 0 H40 L64 24 V77 Q64 80 61 80 H3 Q0 80 0 77 Z"/><path fill="#000" opacity=".18" d="M40 0 L64 24 V25.500 H44 Q40 25.500 40 21 Z"/><path fill="#6b6b6b" d="M40 0 L64 24 H44 Q40 24 40 20 Z"/><g fill="none" stroke="#fff" stroke-width="4" stroke-linecap="round"><path d="M22 38 V66 M34 38 V66 M13.500 46 H42 M13.500 58 H42 M50 38 V58"/></g><circle cx="50" cy="66" r="2.300" fill="#fff"/></svg><div class="lb" style="left:812px;top:381px">blind_sql.sh</div><svg style="left:55px;top:436px" width="64" height="80" viewBox="0 0 64 80"><path fill="#e4e4e4" d="M0 3 Q0 0 3 0 H40 L64 24 V77 Q64 80 61 80 H3 Q0 80 0 77 Z"/><path fill="#000" opacity=".18" d="M40 0 L64 24 V25.500 H44 Q40 25.500 40 21 Z"/><path fill="#fafafa" d="M40 0 L64 24 H44 Q40 24 40 20 Z"/><path fill="#737373" d="M14 38 h36 v4 h-36z M14 46 h36 v4 h-36z M14 54 h36 v4 h-36z M14 62 h22 v4 h-22z"/></svg><div class="lb" style="left:7.6px;top:525px">email.txt</div><svg style="left:216px;top:436px" width="64" height="80" viewBox="0 0 64 80"><path fill="#3f51b5" d="M0 3 Q0 0 3 0 H40 L64 24 V77 Q64 80 61 80 H3 Q0 80 0 77 Z"/><path fill="#000" opacity=".18" d="M40 0 L64 24 V25.500 H44 Q40 25.500 40 21 Z"/><path fill="#7986cb" d="M40 0 L64 24 H44 Q40 24 40 20 Z"/><path fill="#2c3a8c" opacity=".6" d="M14 39 h36 v4 h-36z M14 47 h36 v4 h-36z M14 55 h36 v4 h-36z M14 63 h24 v4 h-24z"/><path fill="#fff" d="M14 38 h36 v4 h-36z M14 46 h36 v4 h-36z M14 54 h36 v4 h-36z M14 62 h24 v4 h-24z"/></svg><div class="lb" style="left:168.5px;top:525px">FixedTerm<br>Tenancy<br><span style="position:relative;left:-3px">Agreement Flat…</span></div><svg style="left:377px;top:436px" width="64" height="80" viewBox="0 0 64 80"><path fill="#e4e4e4" d="M0 3 Q0 0 3 0 H40 L64 24 V77 Q64 80 61 80 H3 Q0 80 0 77 Z"/><path fill="#000" opacity=".18" d="M40 0 L64 24 V25.500 H44 Q40 25.500 40 21 Z"/><path fill="#fafafa" d="M40 0 L64 24 H44 Q40 24 40 20 Z"/><rect x="12" y="44" width="40" height="22" rx="2.500" fill="none" stroke="#dc4b4f" stroke-width="4"/><path fill="#dc4b4f" d="M18 62 V48 H22 L26 53 L30 48 H34 V62 H30 V54 L26 59 L22 54 V62 Z M40 48 H44 V55 H48 L42 62 L36 55 H40 Z"/></svg><div class="lb" style="left:329.75px;top:525px">law.md</div><svg style="left:538px;top:436px" width="64" height="80" viewBox="0 0 64 80"><path fill="#e4e4e4" d="M0 3 Q0 0 3 0 H40 L64 24 V77 Q64 80 61 80 H3 Q0 80 0 77 Z"/><path fill="#000" opacity=".18" d="M40 0 L64 24 V25.500 H44 Q40 25.500 40 21 Z"/><path fill="#fafafa" d="M40 0 L64 24 H44 Q40 24 40 20 Z"/><path fill="#737373" d="M14 38 h36 v4 h-36z M14 46 h36 v4 h-36z M14 54 h36 v4 h-36z M14 62 h22 v4 h-22z"/></svg><div class="lb" style="left:490px;top:525px">p4p1.ovpn</div><svg style="left:667px;top:414px" width="128" height="110" viewBox="0 0 128 110"><rect width="128" height="110" fill="#fff"/><g transform="translate(49.5 21)"><path fill="#333" d="M0.200 6.200 C2.500 4.500 5 3.200 6.500 1.800 C8.500 0.200 11 -0.200 13.500 0.500 C17.500 1.800 20.500 5.500 22.500 10.500 C23.600 13.400 24.600 16.500 25.400 19.500 C24.600 20.500 24 21.600 23.600 22.800 C21 17.500 17.500 13.500 13.800 12 C11.800 11.300 10.500 12.300 10.200 14 C10 16.500 11.500 19.800 13.500 22.500 C15.500 25.200 17.500 28.500 18.800 32 C19.600 34.500 19.500 37 18.700 39.200 C17.500 38 16.200 36.500 14.800 35.800 C14.200 37.500 14.800 39.500 15.200 41.200 C14.500 42.200 14.200 43.500 14.800 44.800 C16 45.800 18 46.200 20 45.600 C17.500 47.800 14 48.800 10 49.300 C7.500 49.700 4.500 49.800 2 49.800 C4 47.800 6 45.500 6.800 42.800 C5.500 39.500 3.800 35.500 3.200 31.500 C2.500 27 3.500 22.500 5 18.500 C6 15.500 6.800 12.500 6 9.800 C5.500 8.200 4 7.300 2.200 7 Z"/><path fill="#333" d="M25.800 22.800 C28 26.500 29.800 31 30.200 36.200 C28.800 35.200 27.500 34.600 26 34.300 C27 30.500 26.800 26.500 25.800 22.800 Z"/><circle cx="9.600" cy="5.200" r="1" fill="#fff"/></g></svg><div class="lb" style="left:651.35px;top:525px">penguin.png</div><svg style="left:860px;top:436px" width="64" height="80" viewBox="0 0 64 80"><path fill="#e4e4e4" d="M0 3 Q0 0 3 0 H40 L64 24 V77 Q64 80 61 80 H3 Q0 80 0 77 Z"/><path fill="#000" opacity=".18" d="M40 0 L64 24 V25.500 H44 Q40 25.500 40 21 Z"/><path fill="#fafafa" d="M40 0 L64 24 H44 Q40 24 40 20 Z"/><path fill="none" stroke="#7a7a7a" stroke-width="3.600" stroke-linejoin="round" d="M0 52 H16 L24 36 L40 68 L48 52 H64"/></svg><div class="lb" style="left:812px;top:525px">steam-234710.<br>log</div><svg style="left:55px;top:603px" width="64" height="80" viewBox="0 0 64 80"><path fill="#d24441" d="M0 3 Q0 0 3 0 H40 L64 24 V77 Q64 80 61 80 H3 Q0 80 0 77 Z"/><path fill="#000" opacity=".18" d="M40 0 L64 24 V25.500 H44 Q40 25.500 40 21 Z"/><path fill="#f07873" d="M40 0 L64 24 H44 Q40 24 40 20 Z"/></svg><svg style="left:216px;top:603px" width="64" height="80" viewBox="0 0 64 80"><path fill="#d24441" d="M0 3 Q0 0 3 0 H40 L64 24 V77 Q64 80 61 80 H3 Q0 80 0 77 Z"/><path fill="#000" opacity=".18" d="M40 0 L64 24 V25.500 H44 Q40 25.500 40 21 Z"/><path fill="#f07873" d="M40 0 L64 24 H44 Q40 24 40 20 Z"/></svg><svg style="left:832px;top:526px" width="122" height="35" viewBox="0 0 122 35"><rect x="0.5" y="0.5" width="120" height="33" fill="none" stroke="#767676" stroke-width="1" stroke-dasharray="2 1"/></svg><span class="abs" style="left:0;top:1px;width:980px;height:1px;background:repeating-linear-gradient(90deg,rgba(255,255,255,.36) 0 5px,rgba(0,0,0,.4) 5px 10px)"></span><span class="abs" style="left:0;top:610px;width:980px;height:1px;background:repeating-linear-gradient(90deg,rgba(255,255,255,.36) 0 5px,rgba(0,0,0,.4) 5px 10px)"></span><span class="abs" style="left:977px;top:23px;width:2px;height:482px;background:#4a4a4a;border-radius:1px"></span></div></div>
<div id="conky"><div style="top:60px;left:0px"><span style="color:#bebebe">System:</span> Linux p4p1XPS15 5.19.10-arch1-1 x86_64</div><div class="hr" style="top:91px"></div><div style="top:98px;left:0px"><span style="color:#bebebe">Uptime:</span> 12h 30m 30s</div><div style="top:117px;left:0px"><span style="color:#bebebe">Frequency (in MHz):</span> 4160</div><div style="top:136px;left:0px"><span style="color:#bebebe">Frequency (in GHz):</span> 4.16</div><div style="top:155px;left:0px"><span style="color:#bebebe">RAM Usage:</span> 5.21 GiB/15.3 GiB - 34%</div><div class="bar" style="left:350px;top:161px;width:111px;height:5px"><i style="width:37px;height:3px"></i></div><div style="top:174px;left:0px"><span style="color:#bebebe">Swap Usage:</span> 0 B/608 MiB - 0%</div><div class="bar" style="left:290px;top:180px;width:171px;height:5px"><i style="width:0px;height:3px"></i></div><div style="top:193px;left:0px"><span style="color:#bebebe">CPU Usage:</span> 8%</div><div class="bar" style="left:140px;top:199px;width:321px;height:5px"><i style="width:26px;height:3px"></i></div><div style="top:212px;left:0px"><span style="color:#bebebe">Processes:</span> 316  <span style="color:#bebebe">Running:</span> 0</div><div class="hr" style="top:243px"></div><div style="top:250px;left:0px"><span style="color:#bebebe">File systems:</span></div><div style="top:269px;left:0px"><span style="color:#bebebe"> / </span>448 GiB/671 GiB</div><div class="bar" style="left:190px;top:274px;width:271px;height:7px"><i style="width:180px;height:5px"></i></div><div class="hr" style="top:300px"></div><div style="top:307px;left:0px"><span style="color:#bebebe">Name              PID     CPU%   MEM%</span></div><div style="top:326px;left:0px"> Xorg                 646   0.55   0.93</div><div style="top:345px;left:0px"> vivaldi-bin        64982   0.17   2.07</div><div style="top:364px;left:0px"> dwm                  808   0.13   0.07</div><div style="top:383px;left:0px"> vivaldi-bin         1139   0.05   2.54</div><div class="hr" style="top:414px"></div><div style="top:421px;left:0px"><span style="color:#bebebe">Update:</span></div><div style="top:440px;left:0px"> need of updates: <span style="color:#00ff00">0</span></div><div class="hr" style="top:471px"></div><div style="top:478px;left:0px"><span style="color:#bebebe">Website:</span></div><div style="top:497px;left:0px"> leosmith.xyz: <span style="color:#00ff00">up</span></div><div style="top:516px;left:0px"> xss_bomb: <span style="color:#00ff00">up</span></div><div style="top:535px;left:0px"> admin panel: <span style="color:#00ff00">up</span></div><div class="hr" style="top:566px"></div><div style="top:573px;left:0px"><span style="color:#bebebe">Todo:</span></div><div class="td" style="top:592px;color:#ffa500">H</div><div class="td" style="top:611px;color:#ffa500">X</div><div class="td" style="top:630px;color:#fff">P</div><div class="td" style="top:649px;color:#fff">C</div><div class="td" style="top:668px;color:#fff">E</div><div class="td" style="top:687px;color:#fff">n</div><div class="td" style="top:706px;color:#fff">W</div><div class="td" style="top:725px;color:#fff">C</div><div class="td" style="top:744px;color:#fff">L</div><div class="td" style="top:763px;color:#fff">I</div><div class="td" style="top:782px;color:#fff">L</div><div class="td" style="top:801px;color:#fff">H</div><div class="hr" style="top:832px"></div><div style="top:839px;left:0px"><span style="color:#bebebe">Open ports:</span>  631</div><div style="top:858px;left:0px"><span style="color:#bebebe">Network Monitor:</span></div><div style="top:877px;left:0px"> [02:43] <span style="color:#00ffff">DISSABLED</span>: ON:SECURE NETWORK NO:NEED</div></div>
</body></html>
